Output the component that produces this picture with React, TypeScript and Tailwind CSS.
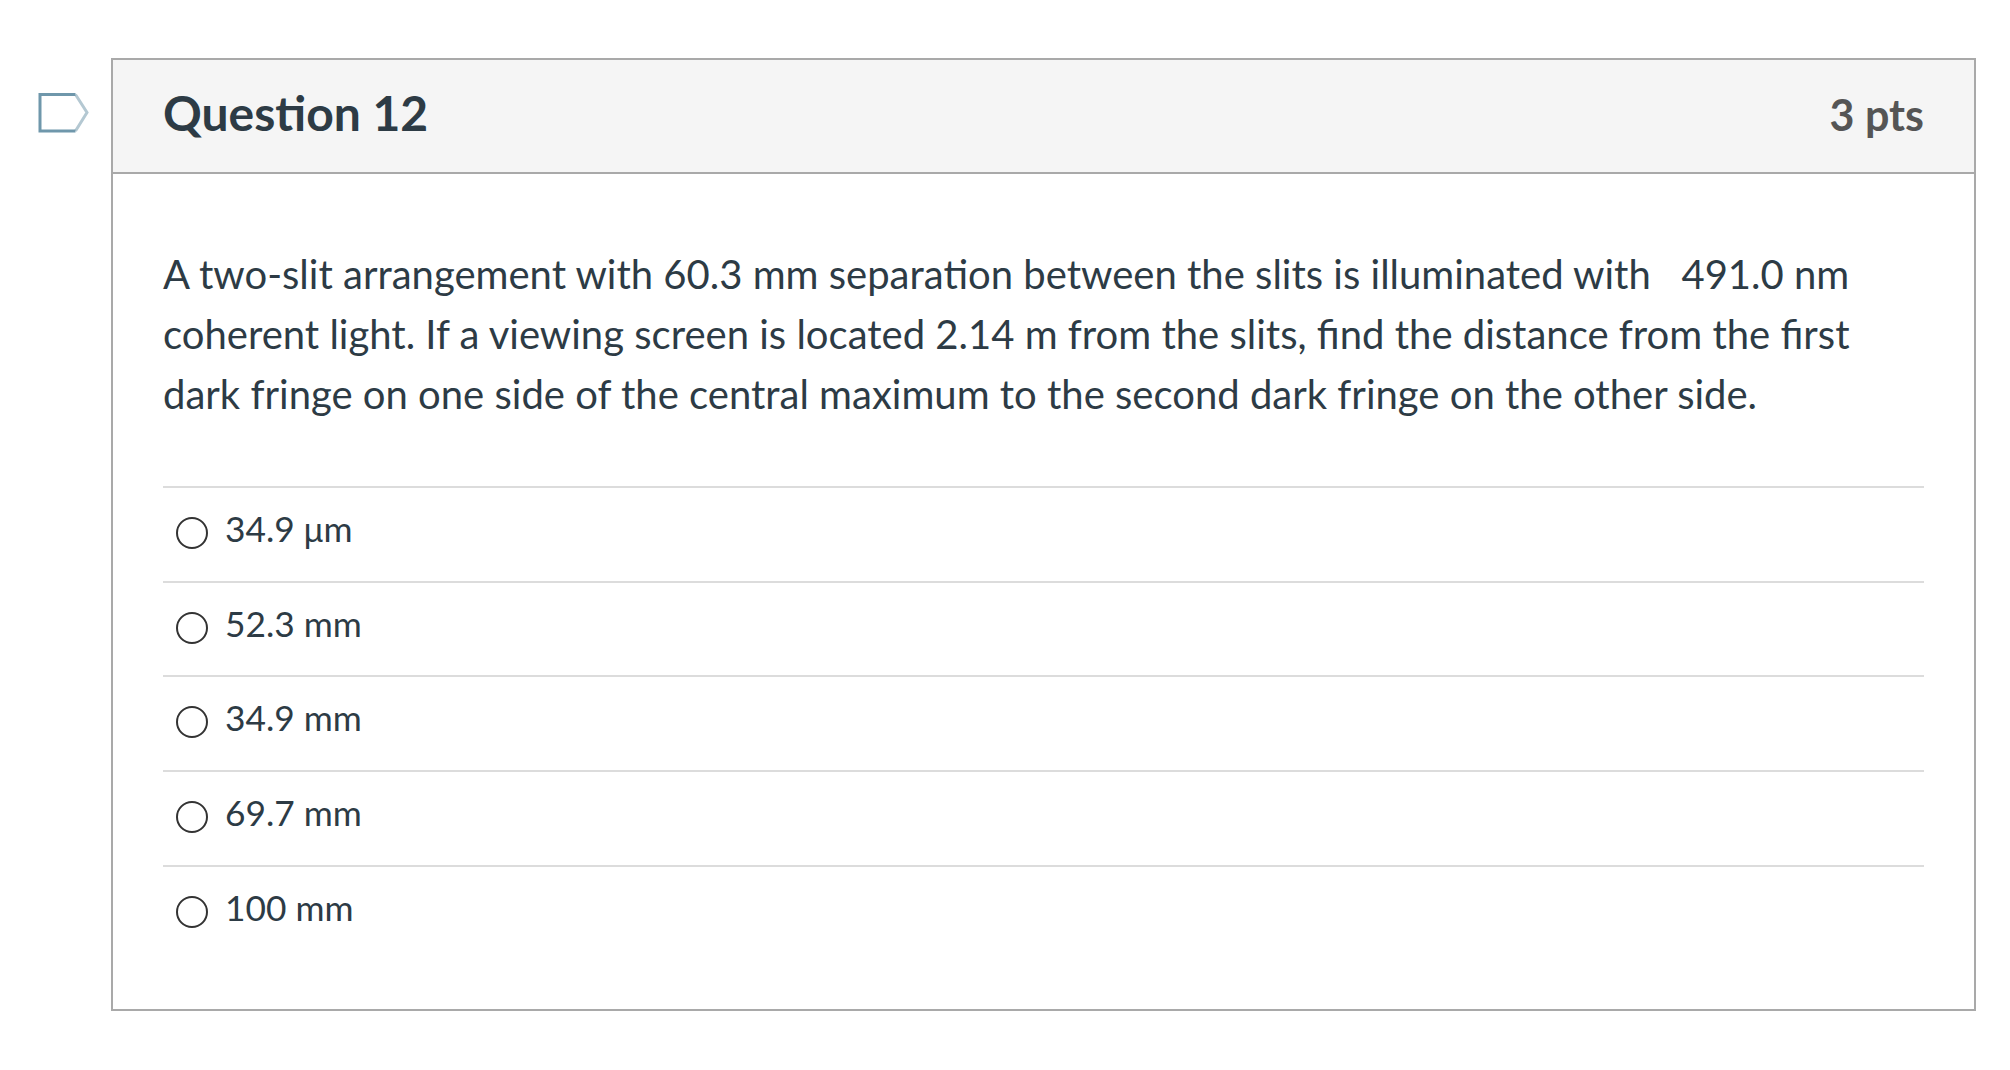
import type { ReactNode } from "react"

// the µ falls back to a plain sans in the original, it's narrower than Lato's
const answers: ReactNode[] = [
  <>34.9 <span className="font-['Liberation_Sans',sans-serif] text-[34px]">µ</span>m</>,
  "52.3 mm",
  "34.9 mm",
  "69.7 mm",
  "100 mm",
]

// Canvas "flag question" marker next to the question box
function FlagIcon() {
  return (
    <svg width="52" height="42" viewBox="0 0 52 42" fill="none" className="block">
      <path d="M37.5 2.5L49 20.5L37.5 39" stroke="#b4c8d2" strokeWidth="3" />
      <path d="M37.5 2.5H2V39H37.5" stroke="#6f97ab" strokeWidth="3" />
    </svg>
  )
}

function Answer({ label }: { label: ReactNode }) {
  return (
    <div className="h-[94.7px] border-t-2 border-[#dcdcdc] flex items-start pl-[13px] pt-[19px]">
      <span className="w-[32px] h-[32px] mt-[10px] rounded-full border-[2px] border-[#333] shrink-0" />
      <span className="ml-[17px] text-[35.3px] leading-[44px] text-[#2d3b45]">{label}</span>
    </div>
  )
}

export default function App() {
  return (
    <div className="w-[2010px] h-[1070px] bg-white overflow-hidden flex items-start pt-[58px] pl-[38px] font-['Lato',sans-serif]">
      <div className="w-[73px] pt-[34px] shrink-0">
        <FlagIcon />
      </div>
      <div className="w-[1865px] h-[953px] border-2 border-[#a9a9a9]">
        <div className="h-[114px] bg-[#f5f5f5] border-b-2 border-[#a9a9a9] flex items-center justify-between px-[50px] pb-[7px]">
          <h2 className="text-[48px] leading-none font-bold text-[#2d3b45]">Question 12</h2>
          <span className="text-[43px] leading-none font-bold text-[#555] mt-[3px]">3 pts</span>
        </div>
        <div className="px-[50px] pt-[70px]">
          <p className="text-[40.03px] leading-[60px] text-[#2d3b45] h-[242px] whitespace-nowrap">
            A two-slit arrangement with 60.3 mm separation between the slits is illuminated with&nbsp;&nbsp; 491.0 nm
            <br />
            coherent light. If a viewing screen is located 2.14 m from the slits, find the distance from the first
            <br />
            dark fringe on one side of the central maximum to the second dark fringe on the other side.
          </p>
          {answers.map((a, i) => (
            <Answer key={i} label={a} />
          ))}
        </div>
      </div>
    </div>
  )
}
